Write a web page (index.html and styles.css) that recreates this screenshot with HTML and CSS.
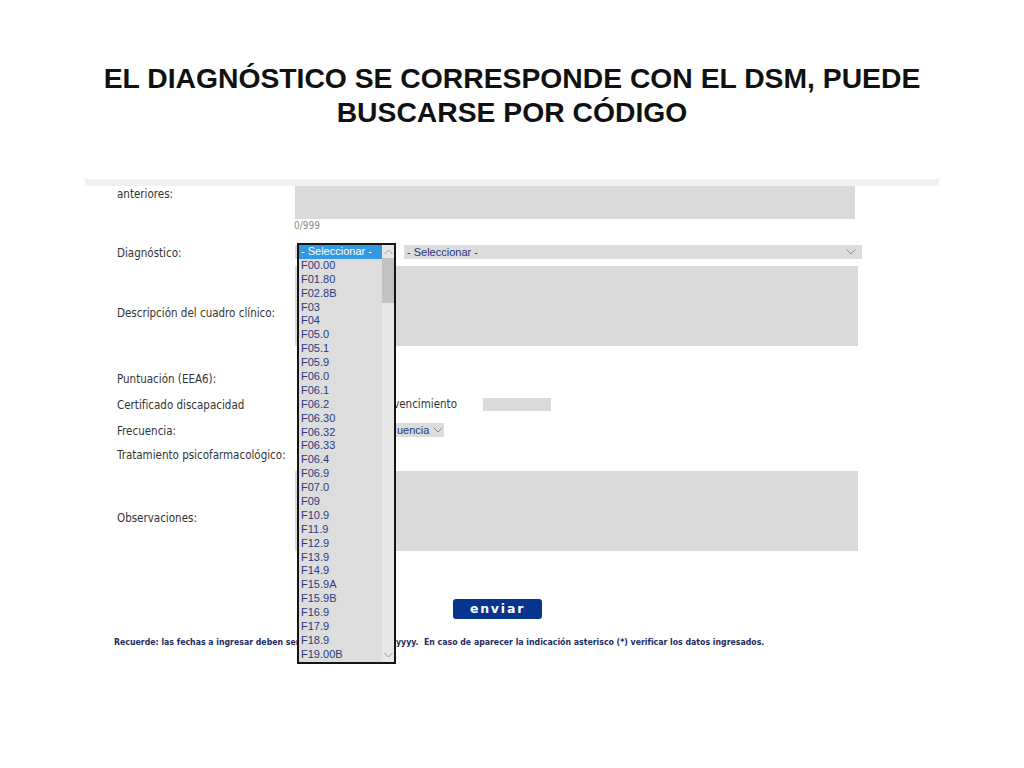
FILE: index.html
```html
<!DOCTYPE html>
<html lang="es">
<head>
<meta charset="utf-8">
<title>Diagnóstico DSM</title>
<link rel="stylesheet" href="styles.css">
</head>
<body>
<h1 class="title">EL DIAGNÓSTICO SE CORRESPONDE CON EL DSM, PUEDE<br>BUSCARSE POR CÓDIGO</h1>

<div class="shot">
  <div class="strip"></div>
  <div class="form">
    <div class="row row-ant">
      <div class="label">anteriores:</div>
      <div class="field"><div class="textarea ta-ant"></div></div>
    </div>
    <div class="counter">0/999</div>

    <div class="row row-diag">
      <div class="label">Diagnóstico:</div>
      <div class="field fields-inline">
        <div class="select sel-hidden"></div>
        <div class="select sel-sub"><span>- Seleccionar -</span><svg class="chev" viewBox="0 0 10 6" width="10" height="6"><path d="M0.5 0.5 L5 5 L9.5 0.5" fill="none" stroke="#8a8a8a" stroke-width="1"/></svg></div>
      </div>
    </div>

    <div class="row row-tall row-desc">
      <div class="label label-low">Descripción del cuadro clínico:</div>
      <div class="field"><div class="textarea ta-big"></div></div>
    </div>

    <div class="row row-punt">
      <div class="label">Puntuación (EEA6):</div>
      <div class="field"></div>
    </div>

    <div class="row row-cert">
      <div class="label">Certificado discapacidad</div>
      <div class="field fields-inline">
        <span class="venc">vencimiento</span>
        <div class="input-small"></div>
      </div>
    </div>

    <div class="row row-frec">
      <div class="label">Frecuencia:</div>
      <div class="field fields-inline">
        <div class="select sel-frec"><span>uencia</span><svg class="chev" viewBox="0 0 10 6" width="10" height="6"><path d="M0.5 0.5 L5 5 L9.5 0.5" fill="none" stroke="#8a8a8a" stroke-width="1"/></svg></div>
      </div>
    </div>

    <div class="row row-trat">
      <div class="label">Tratamiento psicofarmacológico:</div>
      <div class="field"></div>
    </div>

    <div class="row row-tall row-obs">
      <div class="label label-low">Observaciones:</div>
      <div class="field"><div class="textarea ta-big ta-obs"></div></div>
    </div>

    <div class="actions"><button class="btn" type="button">enviar</button></div>

    <p class="note"><span class="note-left">Recuerde: las fechas a ingresar deben ser</span><span class="note-right">yyyy.&nbsp; En caso de aparecer la indicación asterisco (*) verificar los datos ingresados.</span></p>
  </div>

  <div class="listbox">
    <ul class="options">
      <li class="selected">- Seleccionar -</li>
      <li>F00.00</li><li>F01.80</li><li>F02.8B</li><li>F03</li><li>F04</li>
      <li>F05.0</li><li>F05.1</li><li>F05.9</li><li>F06.0</li><li>F06.1</li>
      <li>F06.2</li><li>F06.30</li><li>F06.32</li><li>F06.33</li><li>F06.4</li>
      <li>F06.9</li><li>F07.0</li><li>F09</li><li>F10.9</li><li>F11.9</li>
      <li>F12.9</li><li>F13.9</li><li>F14.9</li><li>F15.9A</li><li>F15.9B</li>
      <li>F16.9</li><li>F17.9</li><li>F18.9</li><li>F19.00B</li>
    </ul>
    <div class="scrollbar">
      <svg class="arrow" viewBox="0 0 9 6" width="9" height="6"><path d="M0.5 5 L4.5 1 L8.5 5" fill="none" stroke="#9a9a9a" stroke-width="1"/></svg>
      <div class="thumb"></div>
      <div class="track"></div>
      <svg class="arrow" viewBox="0 0 9 6" width="9" height="6"><path d="M0.5 1 L4.5 5 L8.5 1" fill="none" stroke="#9a9a9a" stroke-width="1"/></svg>
    </div>
  </div>
</div>
</body>
</html>
```

FILE: styles.css
```css
* { box-sizing: border-box; }

html, body {
  margin: 0;
  padding: 0;
  background: #ffffff;
}

body {
  width: 1024px;
  height: 768px;
  overflow: hidden;
  font-family: "Liberation Sans", Arial, sans-serif;
}

.title {
  margin: 61px 0 0 0;
  font-family: "Liberation Sans", Arial, sans-serif;
  font-size: 28.3px;
  line-height: 34px;
  font-weight: bold;
  text-align: center;
  color: #111111;
}

.shot {
  position: relative;
  margin: 50px 0 0 85px;
  width: 854px;
}

.strip {
  height: 7px;
  background: #f1f1f1;
}

.form {
  padding-left: 32px;
  font-family: "DejaVu Sans Condensed", "DejaVu Sans", sans-serif;
  font-stretch: condensed;
  font-size: 11.5px;
  color: #333333;
}

.row {
  display: grid;
  grid-template-columns: 178px 1fr;
  align-items: start;
}

.label {
  line-height: 14px;
  padding-top: 1px;
  white-space: nowrap;
}

.label-low {
  padding-top: 40px;
}

.field {
  min-height: 14px;
}

.fields-inline {
  display: flex;
  align-items: center;
}

.textarea {
  background: #dadada;
}

.ta-ant {
  width: 560px;
  height: 33px;
}

.counter {
  margin: 1px 0 0 177px;
  font-size: 10px;
  line-height: 12px;
  color: #8a8a8a;
}

.row-diag { margin-top: 13px; }

.select {
  height: 14px;
  background: #dcdcdc;
  color: #26367a;
  font-family: "Liberation Sans", Arial, sans-serif;
  font-stretch: normal;
  font-size: 11px;
  line-height: 14px;
  display: flex;
  align-items: center;
  justify-content: space-between;
  padding: 0 6px 0 3px;
  white-space: nowrap;
  overflow: hidden;
}

.sel-hidden {
  width: 101px;
}

.sel-sub {
  width: 458px;
  margin-left: 8px;
}

.chev { flex: none; }

.row-desc { margin-top: 6px; }

.ta-big {
  width: 563px;
  height: 80px;
}

.row-punt { margin-top: 25px; }

.row-cert { margin-top: 11px; }

.venc {
  width: 162px;
  text-align: right;
  line-height: 14px;
  white-space: nowrap;
}

.input-small {
  margin-left: 26px;
  width: 68px;
  height: 13px;
  background: #dadada;
}

.row-frec { margin-top: 11px; }

.sel-frec {
  margin-left: 76px;
  width: 73px;
  padding: 0 3px 0 26px;
  justify-content: flex-start;
  gap: 4px;
}

.row-trat { margin-top: 9px; }

.row-obs { margin-top: 9px; }

.actions {
  margin-top: 48px;
  padding-left: 336px;
}

.btn {
  display: block;
  width: 89px;
  height: 20px;
  border: none;
  border-radius: 3px;
  background: #06348e;
  color: #ffffff;
  font-family: "DejaVu Sans", Verdana, sans-serif;
  font-size: 12.5px;
  font-weight: bold;
  letter-spacing: 1.8px;
  line-height: 20px;
  padding: 0;
  text-align: center;
}

.note {
  margin: 17px 0 0 -3px;
  display: flex;
  font-family: "DejaVu Sans Condensed", "DejaVu Sans", sans-serif;
  font-stretch: condensed;
  font-weight: bold;
  font-size: 8.7px;
  line-height: 12px;
  color: #1c2c5e;
  white-space: nowrap;
}

.note-left {
  width: 185px;
  overflow: hidden;
}

.note-right {
  margin-left: 97px;
}

/* open listbox overlay */
.listbox {
  position: absolute;
  left: 212px;
  top: 64px;
  width: 99px;
  height: 421px;
  border: 2px solid #141414;
  background: #dddddd;
  display: flex;
}

.options {
  list-style: none;
  margin: 0;
  padding: 0;
  width: 83px;
  font-family: "Liberation Sans", Arial, sans-serif;
  font-size: 11px;
  line-height: 13.9px;
  color: #283c80;
}

.options li {
  height: 13.9px;
  padding-left: 2px;
  white-space: nowrap;
}

.options li.selected {
  background: #3399e2;
  color: #ffffff;
}

.scrollbar {
  flex: 1;
  background: #e7e7e7;
  display: flex;
  flex-direction: column;
  align-items: center;
}

.arrow {
  flex: none;
  margin: 4px 0;
}

.thumb {
  width: 12px;
  height: 45px;
  background: #c2c2c2;
  margin-top: -1px;
}

.track { flex: 1; }
```
